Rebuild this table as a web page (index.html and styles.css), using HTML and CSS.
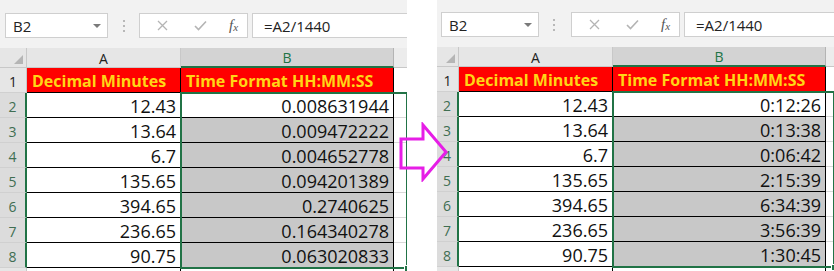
FILE: index.html
```html
<!DOCTYPE html>
<html>
<head>
<meta charset="utf-8">
<link rel="stylesheet" href="styles.css">
</head>
<body>
<div class="page">
  <section class="panel panel-left">
    <div class="toolbar">
      <div class="namebox"><span>B2</span><span class="caret"></span></div>
      <div class="dots"><i></i><i></i><i></i></div>
      <div class="btnbox">
        <svg class="ico ico-x" width="11" height="11" viewBox="0 0 11 11"><path d="M1 1 L10 10 M10 1 L1 10" stroke="#b4b4b4" stroke-width="1.3" fill="none"/></svg>
        <svg class="ico ico-check" width="13" height="11" viewBox="0 0 13 11"><path d="M1 6 L4.5 9.5 L12 1.5" stroke="#b4b4b4" stroke-width="1.6" fill="none"/></svg>
        <span class="fx">f<span class="fx-sub">x</span></span>
      </div>
      <div class="formula">=A2/1440</div>
    </div>
    <div class="sheet">
      <div class="corner"><span class="tri"></span></div>
      <div class="colh">A</div>
      <div class="colh colh-sel">B</div>
      <div class="colh colh-rest"></div>

      <div class="rowh">1</div>
      <div class="cell head">Decimal Minutes</div>
      <div class="cell head">Time Format HH:MM:SS</div>
      <div class="rest"></div>

      <div class="rowh rowh-sel">2</div><div class="cell">12.43</div><div class="cell">0.008631944</div><div class="rest"></div>
      <div class="rowh rowh-sel">3</div><div class="cell">13.64</div><div class="cell shade">0.009472222</div><div class="rest"></div>
      <div class="rowh rowh-sel">4</div><div class="cell">6.7</div><div class="cell shade">0.004652778</div><div class="rest"></div>
      <div class="rowh rowh-sel">5</div><div class="cell">135.65</div><div class="cell shade">0.094201389</div><div class="rest"></div>
      <div class="rowh rowh-sel">6</div><div class="cell">394.65</div><div class="cell shade">0.2740625</div><div class="rest"></div>
      <div class="rowh rowh-sel">7</div><div class="cell">236.65</div><div class="cell shade">0.164340278</div><div class="rest"></div>
      <div class="rowh rowh-sel">8</div><div class="cell">90.75</div><div class="cell shade">0.063020833</div><div class="rest"></div>

      <div class="rowh"></div><div class="cell"></div><div class="cell"></div><div class="rest"></div>

      <div class="selbox"><span class="handle"></span></div>
    </div>
  </section>

  <section class="panel panel-right">
    <div class="toolbar">
      <div class="namebox"><span>B2</span><span class="caret"></span></div>
      <div class="dots"><i></i><i></i><i></i></div>
      <div class="btnbox">
        <svg class="ico ico-x" width="11" height="11" viewBox="0 0 11 11"><path d="M1 1 L10 10 M10 1 L1 10" stroke="#b4b4b4" stroke-width="1.3" fill="none"/></svg>
        <svg class="ico ico-check" width="13" height="11" viewBox="0 0 13 11"><path d="M1 6 L4.5 9.5 L12 1.5" stroke="#b4b4b4" stroke-width="1.6" fill="none"/></svg>
        <span class="fx">f<span class="fx-sub">x</span></span>
      </div>
      <div class="formula">=A2/1440</div>
    </div>
    <div class="sheet">
      <div class="corner"><span class="tri"></span></div>
      <div class="colh">A</div>
      <div class="colh colh-sel">B</div>
      <div class="colh colh-rest"></div>

      <div class="rowh">1</div>
      <div class="cell head">Decimal Minutes</div>
      <div class="cell head">Time Format HH:MM:SS</div>
      <div class="rest"></div>

      <div class="rowh rowh-sel">2</div><div class="cell">12.43</div><div class="cell">0:12:26</div><div class="rest"></div>
      <div class="rowh rowh-sel">3</div><div class="cell">13.64</div><div class="cell shade">0:13:38</div><div class="rest"></div>
      <div class="rowh rowh-sel">4</div><div class="cell">6.7</div><div class="cell shade">0:06:42</div><div class="rest"></div>
      <div class="rowh rowh-sel">5</div><div class="cell">135.65</div><div class="cell shade">2:15:39</div><div class="rest"></div>
      <div class="rowh rowh-sel">6</div><div class="cell">394.65</div><div class="cell shade">6:34:39</div><div class="rest"></div>
      <div class="rowh rowh-sel">7</div><div class="cell">236.65</div><div class="cell shade">3:56:39</div><div class="rest"></div>
      <div class="rowh rowh-sel">8</div><div class="cell">90.75</div><div class="cell shade">1:30:45</div><div class="rest"></div>

      <div class="rowh"></div><div class="cell"></div><div class="cell"></div><div class="rest"></div>

      <div class="selbox"><span class="handle"></span></div>
    </div>
  </section>

  <svg class="arrow" width="52" height="60" viewBox="398 122 52 60">
    <polygon points="401,139 423,139 423,125 446,152 423,179 423,168 401,168" fill="none" stroke="#e61ee6" stroke-width="3" stroke-linejoin="miter"/>
  </svg>
</div>
</body>
</html>
```

FILE: styles.css
```css
* { box-sizing: border-box; }

html, body {
  margin: 0;
  padding: 0;
  background: #ffffff;
}

.page {
  position: relative;
  display: flex;
  width: 834px;
  height: 271px;
  overflow: hidden;
  font-family: "Open Sans", "Liberation Sans", sans-serif;
  color: #000;
}

.panel {
  display: flex;
  flex-direction: column;
  overflow: hidden;
}

.panel-left {
  width: 407px;
  --rh: 27px;
  --nb-left: 5px;
  --nb-width: 103px;
  --dots-gap: 15px;
  --btn-gap: 14px;
}

.panel-right {
  width: 397px;
  margin-left: 30px;
  --rh: 22px;
  --nb-left: 4px;
  --nb-width: 98px;
  --dots-gap: 14px;
  --btn-gap: 16px;
}

/* ---------- toolbar ---------- */
.toolbar {
  height: 48px;
  flex: none;
  background: #f2f2f2;
  display: flex;
  align-items: flex-start;
  padding-top: 13px;
  white-space: nowrap;
}

.panel-right .toolbar { padding-top: 12px; height: 47px; }

.namebox,
.btnbox,
.formula {
  height: 25px;
  background: #fff;
  border: 1px solid #cfcfcf;
  display: flex;
  align-items: center;
  font-size: 15px;
  color: #222;
}

.namebox {
  margin-left: var(--nb-left);
  width: var(--nb-width);
  padding-left: 7px;
  justify-content: space-between;
  padding-right: 6px;
}

.caret {
  width: 0;
  height: 0;
  border-left: 4px solid transparent;
  border-right: 4px solid transparent;
  border-top: 4px solid #7a7a7a;
}

.dots {
  margin-left: var(--dots-gap);
  display: flex;
  flex-direction: column;
  gap: 3px;
  padding-top: 7px;
  width: 2px;
}

.dots i {
  display: block;
  width: 2px;
  height: 2px;
  background: #b8b8b8;
}

.btnbox {
  margin-left: var(--btn-gap);
  width: 109px;
  padding-left: 17px;
}

.ico-x { flex: none; }
.ico-check { flex: none; margin-left: 26px; }

.fx {
  margin-left: 22px;
  font-family: "Liberation Serif", serif;
  font-style: italic;
  font-size: 15px;
  color: #555;
}

.fx-sub {
  font-size: 11px;
  position: relative;
  top: 1px;
}

.formula {
  margin-left: 4px;
  flex: 1;
  padding-left: 11px;
  border-right: none;
}

/* ---------- sheet ---------- */
.sheet {
  position: relative;
  flex: 1;
  display: grid;
  grid-template-columns: var(--rh) 154px 213px 1fr;
  grid-template-rows: 20px repeat(8, 25px) 25px;
  background: #fff;
}

.corner {
  background: #e6e6e6;
  border-right: 1px solid #c8c8c8;
  border-bottom: 1px solid #c8c8c8;
  position: relative;
}

.tri {
  position: absolute;
  right: 3px;
  bottom: 3px;
  width: 0;
  height: 0;
  border-left: 9px solid transparent;
  border-bottom: 9px solid #b5b5b5;
}

.colh {
  background: #e6e6e6;
  border-right: 1px solid #c8c8c8;
  border-bottom: 1px solid #c8c8c8;
  display: flex;
  align-items: center;
  justify-content: center;
  font-size: 14px;
  color: #222;
  padding-top: 1px;
}

.colh-sel {
  background: #d3d3d3;
  color: #217346;
  border-bottom: 2px solid #217346;
  border-right-color: #b4b4b4;
}

.colh-rest {
  background: #ececec;
  border-right: none;
}

.rowh {
  background: #e6e6e6;
  border-right: 1px solid #c8c8c8;
  border-bottom: 1px solid #d0d0d0;
  display: flex;
  align-items: center;
  justify-content: center;
  font-size: 14px;
  color: #222;
  padding-top: 3px;
}

.rowh-sel {
  background: #dcdcdc;
  color: #3f6e52;
  border-right: 2px solid #217346;
}

.cell {
  border-right: 1px solid #000;
  border-bottom: 1px solid #000;
  display: flex;
  align-items: center;
  justify-content: flex-end;
  padding-right: 4px;
  padding-top: 2px;
  font-size: 18px;
  color: #111;
  white-space: nowrap;
  overflow: hidden;
}

.cell.shade { background: #c8c8c8; }

.cell.head {
  background: #ff0000;
  color: #ffd616;
  font-weight: 700;
  font-size: 16px;
  justify-content: flex-start;
  padding-left: 5px;
  padding-right: 0;
}

.rest {
  border-bottom: 1px solid #d9d9d9;
}

.selbox {
  position: absolute;
  grid-column: 3;
  grid-row: 3 / 10;
  top: -1px;
  bottom: -1px;
  left: -1px;
  right: -1px;
  border: 2px solid #217346;
  pointer-events: none;
  z-index: 2;
}

.handle {
  position: absolute;
  right: -5px;
  bottom: -5px;
  width: 7px;
  height: 7px;
  background: #217346;
  border: 1px solid #fff;
}

/* ---------- arrow ---------- */
.arrow {
  position: absolute;
  left: 398px;
  top: 122px;
  z-index: 5;
}
```
